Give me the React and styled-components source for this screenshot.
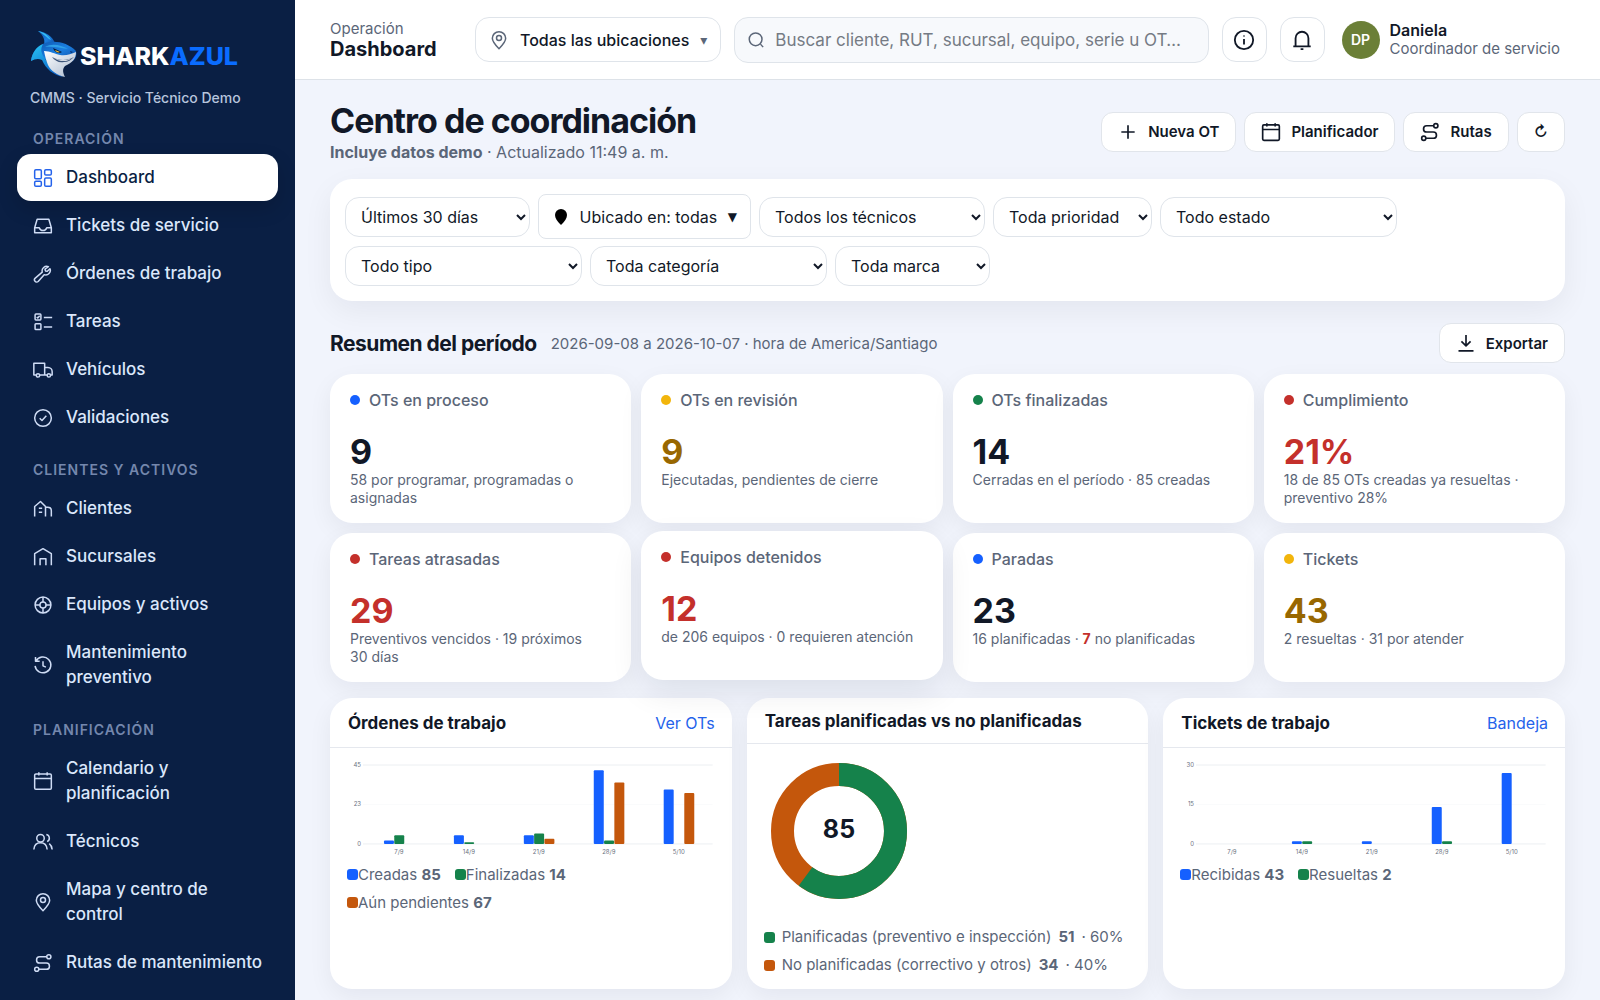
import React from "react";
import styled, { createGlobalStyle } from "styled-components";

const GlobalStyle = createGlobalStyle`
  * {
    box-sizing: border-box;
  }
  body {
    margin: 0;
    background: #f1f4fc;
    color: #111827;
    font-family: Inter, "Noto Sans", sans-serif;
    font-size: 16px;
  }
  button, input, select {
    font-family: inherit;
    color: inherit;
  }
  h1, h2, h3, p {
    margin: 0;
  }
`;

const Page = styled.div`
  display: flex;
  min-height: 100vh;
`;

/* ---------- sidebar ---------- */

const Sidebar = styled.aside`
  position: sticky;
  top: 0;
  flex: 0 0 295px;
  height: 100vh;
  overflow: hidden;
  padding: 29px 17px 0;
  background: #0a1f44;
`;

const Brand = styled.a`
  display: flex;
  align-items: center;
  gap: 2px;
  margin-left: 14px;
  height: 50px;
  color: #ffffff;
  font-size: 25px;
  font-weight: 800;
  text-decoration: none;
`;

const BrandName = styled.span`
  padding-top: 4px;
`;

const BrandBlue = styled.span`
  color: #0a6cff;
`;

const BrandNote = styled.p`
  margin: 9px 0 23px 13px;
  color: #b7c5dd;
  font-size: 14px;
  font-weight: 500;
  line-height: 20px;
`;

const NavGroup = styled.nav`
  display: flex;
  flex-direction: column;
  gap: 1px;
  margin-bottom: 21px;
`;

const NavHeading = styled.h2`
  margin: 0 0 6px 16px;
  color: #7487ad;
  font-size: 14px;
  font-weight: 600;
  letter-spacing: 1px;
  line-height: 16px;
  text-transform: uppercase;
`;

const NavLink = styled.a`
  display: flex;
  align-items: center;
  gap: 13px;
  padding: 11px 14px 11px 16px;
  border-radius: 14px;
  background: ${({ $active }) => ($active ? "#ffffff" : "transparent")};
  box-shadow: ${({ $active }) =>
    $active ? "0 8px 20px rgba(0, 0, 0, 0.16)" : "none"};
  color: ${({ $active }) => ($active ? "#0a1f44" : "#dbe7fb")};
  font-size: 17px;
  font-weight: 500;
  line-height: 25px;
  text-decoration: none;

  svg {
    color: ${({ $active }) => ($active ? "#2563eb" : "#cfdcf5")};
  }
`;

/* ---------- top bar ---------- */

const Main = styled.div`
  flex: 1;
  min-width: 0;
`;

const TopBar = styled.header`
  display: flex;
  align-items: center;
  gap: 13px;
  height: 80px;
  padding: 0 40px 0 35px;
  border-bottom: 1px solid #dde2e8;
  background: #ffffff;
`;

const Crumb = styled.div`
  width: 132px;
  color: #5b6678;
  font-size: 15px;
  line-height: 19px;
`;

const CrumbTitle = styled.strong`
  display: block;
  color: #111827;
  font-size: 20px;
  font-weight: 700;
  line-height: 23px;
`;

const LocationButton = styled.button`
  display: flex;
  align-items: center;
  gap: 11px;
  height: 45px;
  padding: 0 13px;
  border: 1px solid #dfe4ea;
  border-radius: 14px;
  background: #ffffff;
  font-size: 16px;
  font-weight: 500;
  white-space: nowrap;

  svg {
    color: #5b6678;
  }
`;

const Caret = styled.span`
  color: ${({ $dark }) => ($dark ? "#111827" : "#5b6678")};
  font-family: "DejaVu Sans", sans-serif;
  font-size: ${({ $dark }) => ($dark ? "12px" : "14px")};
`;

const SearchBox = styled.label`
  display: flex;
  flex: 1;
  align-items: center;
  gap: 8px;
  height: 46px;
  padding: 0 12px;
  border: 1px solid #dfe4ea;
  border-radius: 14px;
  background: #f7f9fc;
  color: #5b6678;
`;

const SearchInput = styled.input`
  flex: 1;
  min-width: 0;
  border: 0;
  outline: 0;
  background: transparent;
  font-size: 17px;

  &::placeholder {
    color: #757b84;
  }
`;

const IconButton = styled.button`
  display: flex;
  align-items: center;
  justify-content: center;
  width: 45px;
  height: 45px;
  padding: 0;
  border: 1px solid #dfe4ea;
  border-radius: 14px;
  background: #ffffff;
`;

const User = styled.div`
  display: flex;
  align-items: center;
  gap: 10px;
  margin-left: 4px;
  white-space: nowrap;
`;

const Avatar = styled.span`
  display: flex;
  align-items: center;
  justify-content: center;
  width: 38px;
  height: 38px;
  border-radius: 50%;
  background: #6b7f37;
  color: #ffffff;
  font-size: 14px;
  font-weight: 600;
`;

const UserName = styled.div`
  font-size: 16px;
  font-weight: 600;
  line-height: 19px;
`;

const UserRole = styled.div`
  color: #5b6678;
  font-size: 15px;
  line-height: 18px;
`;

/* ---------- page heading and filters ---------- */

const Content = styled.main`
  padding: 21px 35px 10px;
`;

const Row = styled.div`
  display: flex;
  align-items: center;
  justify-content: space-between;
`;

const Title = styled.h1`
  font-size: 34px;
  font-weight: 700;
  letter-spacing: -1px;
  line-height: 40px;
`;

const Updated = styled.p`
  margin-top: 1px;
  color: #5b6678;
  font-size: 16px;
  line-height: 20px;
`;

const Actions = styled.div`
  display: flex;
  gap: 8px;
`;

const ActionButton = styled.button`
  display: flex;
  align-items: center;
  gap: 10px;
  height: 40px;
  padding: 0 16px;
  border: 1px solid #e1e5eb;
  border-radius: 12px;
  background: #ffffff;
  font-size: 15px;
  font-weight: 600;
`;

const Filters = styled.form`
  display: flex;
  flex-wrap: wrap;
  align-items: center;
  gap: 7px 8px;
  margin-top: 17px;
  padding: 15px;
  border-radius: 22px;
  background: #ffffff;
  box-shadow: 0 10px 30px rgba(15, 23, 42, 0.06);
`;

const Select = styled.select`
  width: ${({ $width }) => $width}px;
  height: 40px;
  padding: 0 11px;
  border: 1px solid #dfe4ea;
  border-radius: 14px;
  background: #ffffff;
  font-size: 16px;
`;

const PlaceButton = styled.button`
  display: flex;
  align-items: center;
  justify-content: space-between;
  width: 213px;
  height: 45px;
  padding: 0 13px 0 14px;
  border: 1px solid #dfe4ea;
  border-radius: 8px;
  background: #ffffff;
  font-size: 16px;
`;

/* ---------- summary ---------- */

const SummaryRow = styled(Row)`
  margin: 22px 0 11px;
`;

const SummaryTitle = styled.h2`
  display: flex;
  align-items: center;
  gap: 14px;
  font-size: 21px;
  font-weight: 700;
  letter-spacing: -0.5px;
`;

const SummaryNote = styled.small`
  color: #5b6678;
  font-size: 15px;
  font-weight: 400;
  letter-spacing: 0;
`;

const Kpis = styled.section`
  display: grid;
  grid-template-columns: repeat(4, 1fr);
  gap: 10px;
`;

const Kpi = styled.article`
  min-height: 149px;
  padding: 16px 20px 14px;
  border-radius: 22px;
  background: #ffffff;
  box-shadow: ${({ $raised }) =>
    $raised
      ? "0 12px 32px rgba(15, 23, 42, 0.09)"
      : "0 8px 24px rgba(15, 23, 42, 0.06)"};
  transform: ${({ $raised }) => ($raised ? "translateY(-2px)" : "none")};
`;

const KpiLabel = styled.h3`
  display: flex;
  align-items: center;
  gap: 9px;
  color: #5b6678;
  font-size: 16px;
  font-weight: 500;
  line-height: 20px;

  &::before {
    content: "";
    width: 10px;
    height: 10px;
    border-radius: 50%;
    background: ${({ $dot }) => $dot};
  }
`;

const KpiValue = styled.div`
  margin-top: 22px;
  color: ${({ $color }) => $color || "#111827"};
  font-size: 34px;
  font-weight: 700;
  line-height: 39px;
`;

const KpiNote = styled.p`
  color: #5b6678;
  font-size: 14px;
  line-height: 18px;
`;

const Alert = styled.b`
  color: #c4302b;
`;

/* ---------- charts ---------- */

const Charts = styled.section`
  display: grid;
  grid-template-columns: repeat(3, 1fr);
  gap: 15px;
  margin-top: 16px;
`;

const Panel = styled.article`
  overflow: hidden;
  border-radius: 22px;
  background: #ffffff;
  box-shadow: 0 8px 24px rgba(15, 23, 42, 0.06);
`;

const PanelHead = styled(Row)`
  padding: 12px 17px 11px 18px;
  border-bottom: 1px solid #e5e8ee;
`;

const PanelTitle = styled.h3`
  font-size: 17px;
  font-weight: 700;
  line-height: 22px;
`;

const PanelLink = styled.a`
  color: #2563eb;
  font-size: 16px;
  line-height: 26px;
  text-decoration: none;
`;

const PanelBody = styled.div`
  padding: 12px 17px 14px;
`;

const BarSvg = styled.svg`
  display: block;
  width: 100%;

  text {
    fill: #6b7280;
    font-size: 6px;
  }
`;

const Legend = styled.ul`
  display: flex;
  flex-wrap: wrap;
  flex-direction: ${({ $column }) => ($column ? "column" : "row")};
  gap: 8px 14px;
  margin: ${({ $column }) => ($column ? "17px" : "7px")} 0 0;
  padding: 0;
  color: #5b6678;
  font-size: 15px;
  line-height: 20px;
  list-style: none;
`;

const LegendItem = styled.li`
  display: flex;
  align-items: center;
  gap: ${({ $gap }) => $gap || 0}px;
  white-space: pre;

  &::before {
    content: "";
    width: 11px;
    height: 11px;
    border-radius: 3px;
    background: ${({ $color }) => $color};
  }
`;

const BLUE = "#1560ff";
const GREEN = "#15824b";
const ORANGE = "#c4570c";
const RED = "#c4302b";
const YELLOW = "#f2b50c";
const AMBER = "#986700";

const icons = {
  dashboard: (
    <>
      <rect x="2" y="2" width="8" height="11" rx="1.5" />
      <rect x="14" y="2" width="8" height="6.5" rx="1.5" />
      <rect x="2" y="16" width="8" height="6" rx="1.5" />
      <rect x="14" y="12" width="8" height="10" rx="1.5" />
    </>
  ),
  inbox: (
    <>
      <path d="M5 4h14l3 10v6H2v-6z" />
      <path d="M2 14h5.500c1 3 2.500 3.500 4.500 3.500s3.500-.5 4.500-3.500H22" />
    </>
  ),
  wrench: (
    <path d="M18.500 3.300a5.500 5.500 0 0 0-7.400 6.500L2.700 17a2.300 2.300 0 0 0 3.500 4l7.200-8.200a5.500 5.500 0 0 0 7-7.200l-3.300 3.200-2.200-.5-.5-2.200z" />
  ),
  tasks: (
    <>
      <rect x="2.500" y="2.500" width="7" height="7" rx="1" />
      <rect x="2.500" y="14" width="7" height="7" rx="1" />
      <path d="m4.500 6 1.200 1.200L8 4.500M13 6.500h10M13 18h10" />
    </>
  ),
  truck: (
    <>
      <path d="M4 18H1V4h13v14H8M14 9h4c3 0 5 2.500 5 5v4h-2M17 18h-3" />
      <circle cx="6" cy="18.500" r="2" />
      <circle cx="19" cy="18.500" r="2" />
    </>
  ),
  check: (
    <>
      <circle cx="12" cy="12" r="10" />
      <path d="m8 12.300 2.800 2.700 5.200-5.700" />
    </>
  ),
  clients: (
    <path d="M2 21V9l7-6 6 6v12M15 10h2.500c3 0 4.500 1.500 4.500 4v7M7 11h4M7 16h4" />
  ),
  branch: <path d="M2 22V8l10-6 10 6v14M8.500 22v-8h7v8" />,
  assets: (
    <>
      <circle cx="12" cy="12" r="9.500" />
      <circle cx="12" cy="12" r="3.700" />
      <path d="M12 2.500v5.800M12 15.700v5.800M2.500 12h5.800M15.700 12h5.800" />
    </>
  ),
  history: (
    <>
      <path d="M3.500 7.500A9.500 9.500 0 1 1 2.500 13M3 2.500v5h5" />
      <path d="M12 7.500V13l3.500 1.500" />
    </>
  ),
  calendar: (
    <>
      <rect x="2" y="3.500" width="20" height="18.500" rx="1.500" />
      <path d="M2 9h20M7 1.500v4M17 1.500v4" />
    </>
  ),
  people: (
    <>
      <circle cx="9" cy="7.500" r="4.500" />
      <path d="M1 21c.5-5 3.500-8 8-8s7.500 3 8 8M16 3a4.500 4.500 0 0 1 1 8.500M19.500 14c2 1.500 3.200 4 3.500 7" />
    </>
  ),
  pin: (
    <>
      <path d="M12 22.500c-5-5-8-8.500-8-12.500a8 8 0 0 1 16 0c0 4-3 7.500-8 12.500z" />
      <circle cx="12" cy="9.500" r="3" />
    </>
  ),
  route: (
    <>
      <circle cx="19" cy="4.500" r="2.500" />
      <circle cx="4.500" cy="19.500" r="2.500" />
      <path d="M16.500 4.500H8a3.700 3.700 0 0 0 0 7.500h8a3.700 3.700 0 0 1 0 7.500H7" />
    </>
  ),
  search: (
    <>
      <circle cx="11.500" cy="11" r="8.500" />
      <path d="m18 17.500 3.500 4" />
    </>
  ),
  info: (
    <>
      <circle cx="12" cy="12" r="10" />
      <path d="M12 11v6M12 7v1.200" />
    </>
  ),
  bell: <path d="M2.500 19h19M5 19v-9a7 7 0 0 1 14 0v9M10.500 22h3" />,
  plus: <path d="M12 4v16M4 12h16" />,
  download: <path d="M12 2.500v13M6.500 10l5.500 5.500 5.500-5.500M3 21.500h18" />,
};

const IconSvg = styled.svg`
  flex: none;
  fill: none;
  stroke: currentColor;
  stroke-linejoin: round;
`;

function Icon({ name, size = 20, weight = 1.8 }) {
  return (
    <IconSvg
      width={size}
      height={size}
      viewBox="0 0 24 24"
      strokeWidth={weight}
      aria-hidden="true"
    >
      {icons[name]}
    </IconSvg>
  );
}

function SharkLogo() {
  return (
    <svg width="47" height="48" viewBox="0 0 47 48" aria-hidden="true">
      <defs>
        <linearGradient id="back" x1="0" y1="0" x2="1" y2="1">
          <stop offset="0" stopColor="#0c4fa8" />
          <stop offset="0.5" stopColor="#1b7fe0" />
          <stop offset="1" stopColor="#0b3f96" />
        </linearGradient>
        <linearGradient id="side" x1="0" y1="0" x2="0.6" y2="1">
          <stop offset="0" stopColor="#29c8f5" />
          <stop offset="1" stopColor="#0b63c9" />
        </linearGradient>
        <linearGradient id="belly" x1="0" y1="0" x2="1" y2="1">
          <stop offset="0" stopColor="#ffffff" />
          <stop offset="1" stopColor="#a9b9cf" />
        </linearGradient>
      </defs>
      <path d="M7 1c8 1 14 5 17 12l-12 5c3-7 1-12-5-17z" fill="url(#back)" />
      <path d="M7 1c6 1 10 4 13 9-4-2-7-6-13-9z" fill="#35bdf2" />
      <path
        d="M0 31c1-9 6-15 14-18 11-3 23 0 31 8 1 4 0 7-3 10l-21 5-7-7c-4-2-9-2-14 2z"
        fill="url(#back)"
      />
      <path
        d="M0 31c1-8 5-14 12-17-3 5-2 10 3 16 3 6 9 11 17 17-10-2-17-8-21-17-4-2-7-1-11 1z"
        fill="url(#side)"
      />
      <path
        d="M13 21c6 0 11 3 16 4 6 1 11-1 16-3 0 7-4 11-11 14-3 3-2 7 0 11-8-2-14-6-17-12-2-5-3-9-4-14z"
        fill="url(#belly)"
      />
      <path
        d="M21 27c7 4 15 4 22 0-3 3-6 5-10 5-5 1-9-1-12-5z"
        fill="#3c5478"
      />
      <path d="M23 28c6 3 13 3 18 0l-3 2c-5 2-11 1-15-2z" fill="#ffffff" />
      <path d="m22 18 9 4c-3 2-7 1-9-4z" fill="#071b3c" />
      <path d="m24 20 5 2c-2 1-4 0-5-2z" fill="#ffc531" />
      <path d="M14 17c7-4 16-2 23 2-8-1-15-3-23-2z" fill="#2f9fe8" />
      <path d="m39 21 3 1-2 1z" fill="#082b66" />
    </svg>
  );
}

const navGroups = [
  {
    title: "Operación",
    items: [
      ["dashboard", "Dashboard"],
      ["inbox", "Tickets de servicio"],
      ["wrench", "Órdenes de trabajo"],
      ["tasks", "Tareas"],
      ["truck", "Vehículos"],
      ["check", "Validaciones"],
    ],
  },
  {
    title: "Clientes y activos",
    items: [
      ["clients", "Clientes"],
      ["branch", "Sucursales"],
      ["assets", "Equipos y activos"],
      ["history", "Mantenimiento preventivo"],
    ],
  },
  {
    title: "Planificación",
    items: [
      ["calendar", "Calendario y planificación"],
      ["people", "Técnicos"],
      ["pin", "Mapa y centro de control"],
      ["route", "Rutas de mantenimiento"],
    ],
  },
];

const kpis = [
  {
    label: "OTs en proceso",
    dot: BLUE,
    value: "9",
    note: "58 por programar, programadas o asignadas",
  },
  {
    label: "OTs en revisión",
    dot: YELLOW,
    value: "9",
    color: AMBER,
    note: "Ejecutadas, pendientes de cierre",
  },
  {
    label: "OTs finalizadas",
    dot: GREEN,
    value: "14",
    note: "Cerradas en el período · 85 creadas",
  },
  {
    label: "Cumplimiento",
    dot: RED,
    value: "21%",
    color: RED,
    note: "18 de 85 OTs creadas ya resueltas · preventivo 28%",
  },
  {
    label: "Tareas atrasadas",
    dot: RED,
    value: "29",
    color: RED,
    note: "Preventivos vencidos · 19 próximos 30\u00a0días",
  },
  {
    label: "Equipos detenidos",
    dot: RED,
    value: "12",
    color: RED,
    note: "de 206 equipos · 0 requieren atención",
    raised: true,
  },
  {
    label: "Paradas",
    dot: BLUE,
    value: "23",
    note: (
      <>
        16 planificadas · <Alert>7</Alert> no planificadas
      </>
    ),
  },
  {
    label: "Tickets",
    dot: YELLOW,
    value: "43",
    color: AMBER,
    note: "2 resueltas · 31 por atender",
  },
];

const weeks = ["7/9", "14/9", "21/9", "28/9", "5/10"];

function BarChart({ label, max, series, colors }) {
  const base = 84;
  const height = 79;
  const bar = 10;
  return (
    <BarSvg viewBox="0 0 368 98" role="img" aria-label={label}>
      {[max, Math.round(max / 2), 0].map((tick, i) => (
        <g key={tick}>
          <line
            x1="16"
            x2="366"
            y1={base - height + (i * height) / 2}
            y2={base - height + (i * height) / 2}
            stroke={i === 1 ? "#fafbfc" : "#eceff2"}
          />
          <text
            x="14"
            y={base - height + (i * height) / 2 + 2}
            textAnchor="end"
          >
            {tick}
          </text>
        </g>
      ))}
      {weeks.map((week, i) => {
        const center = 52 + i * 70;
        const left = center - (series.length * bar) / 2;
        return (
          <g key={week}>
            {series.map((values, n) => {
              const h = (values[i] / max) * height;
              return (
                <rect
                  key={n}
                  x={left + n * (bar + 0.3)}
                  y={base - h}
                  width={bar}
                  height={h}
                  rx="1"
                  fill={colors[n]}
                />
              );
            })}
            <text x={center} y={base + 10} textAnchor="middle">
              {week}
            </text>
          </g>
        );
      })}
    </BarSvg>
  );
}

function Donut({ total, share }) {
  const length = 2 * Math.PI * 56.5;
  return (
    <svg
      width="150"
      height="150"
      viewBox="0 0 150 150"
      role="img"
      aria-label="Tareas planificadas vs no planificadas"
    >
      <g fill="none" strokeWidth="23" transform="rotate(-90 75 75)">
        <circle cx="75" cy="75" r="56.500" stroke={ORANGE} />
        <circle
          cx="75"
          cy="75"
          r="56.500"
          stroke={GREEN}
          strokeDasharray={`${length * share} ${length}`}
        />
      </g>
      <text
        x="75"
        y="82"
        fill="#111827"
        fontSize="25"
        fontWeight="700"
        textAnchor="middle"
      >
        {total}
      </text>
    </svg>
  );
}

function Filter({ label, width }) {
  return (
    <Select $width={width} aria-label={label}>
      <option>{label}</option>
    </Select>
  );
}

function App() {
  return (
    <Page>
      <GlobalStyle />
      <Sidebar>
        <Brand href="#">
          <SharkLogo />
          <BrandName>
            SHARK<BrandBlue>AZUL</BrandBlue>
          </BrandName>
        </Brand>
        <BrandNote>CMMS · Servicio Técnico Demo</BrandNote>
        {navGroups.map((group) => (
          <NavGroup key={group.title} aria-label={group.title}>
            <NavHeading>{group.title}</NavHeading>
            {group.items.map(([icon, text]) => (
              <NavLink key={text} href="#" $active={text === "Dashboard"}>
                <Icon name={icon} />
                <span>{text}</span>
              </NavLink>
            ))}
          </NavGroup>
        ))}
      </Sidebar>

      <Main>
        <TopBar>
          <Crumb>
            Operación
            <CrumbTitle>Dashboard</CrumbTitle>
          </Crumb>
          <LocationButton type="button">
            <Icon name="pin" />
            Todas las ubicaciones
            <Caret>▾</Caret>
          </LocationButton>
          <SearchBox>
            <Icon name="search" size={18} weight={2} />
            <SearchInput
              type="text"
              aria-label="Buscar"
              placeholder="Buscar cliente, RUT, sucursal, equipo, serie u OT…"
            />
          </SearchBox>
          <IconButton type="button" aria-label="Información">
            <Icon name="info" size={22} weight={2} />
          </IconButton>
          <IconButton type="button" aria-label="Notificaciones">
            <Icon name="bell" size={22} weight={2} />
          </IconButton>
          <User>
            <Avatar>DP</Avatar>
            <div>
              <UserName>Daniela</UserName>
              <UserRole>Coordinador de servicio</UserRole>
            </div>
          </User>
        </TopBar>

        <Content>
          <Row>
            <div>
              <Title>Centro de coordinación</Title>
              <Updated>
                <b>Incluye datos demo</b> · Actualizado 11:49 a. m.
              </Updated>
            </div>
            <Actions>
              <ActionButton type="button">
                <Icon name="plus" weight={2} />
                Nueva OT
              </ActionButton>
              <ActionButton type="button">
                <Icon name="calendar" weight={2} />
                Planificador
              </ActionButton>
              <ActionButton type="button">
                <Icon name="route" weight={2} />
                Rutas
              </ActionButton>
              <ActionButton type="button" aria-label="Actualizar">
                ↻
              </ActionButton>
            </Actions>
          </Row>

          <Filters>
            <Filter label="Últimos 30 días" width={185} />
            <PlaceButton type="button">
              <svg width="16" height="18" viewBox="0 0 16 18" aria-hidden="true">
                <path d="M8 17C4 13 2 10 2 7a6 6 0 0 1 12 0c0 3-2 6-6 10z" />
              </svg>
              Ubicado en: todas
              <Caret $dark>▼</Caret>
            </PlaceButton>
            <Filter label="Todos los técnicos" width={226} />
            <Filter label="Toda prioridad" width={159} />
            <Filter label="Todo estado" width={237} />
            <Filter label="Todo tipo" width={237} />
            <Filter label="Toda categoría" width={237} />
            <Filter label="Toda marca" width={155} />
          </Filters>

          <SummaryRow>
            <SummaryTitle>
              Resumen del período
              <SummaryNote>
                2026-09-08 a 2026-10-07 · hora de America/Santiago
              </SummaryNote>
            </SummaryTitle>
            <ActionButton type="button">
              <Icon name="download" weight={2} />
              Exportar
            </ActionButton>
          </SummaryRow>

          <Kpis>
            {kpis.map((kpi) => (
              <Kpi key={kpi.label} $raised={kpi.raised}>
                <KpiLabel $dot={kpi.dot}>{kpi.label}</KpiLabel>
                <KpiValue $color={kpi.color}>{kpi.value}</KpiValue>
                <KpiNote>{kpi.note}</KpiNote>
              </Kpi>
            ))}
          </Kpis>

          <Charts>
            <Panel>
              <PanelHead>
                <PanelTitle>Órdenes de trabajo</PanelTitle>
                <PanelLink href="#">Ver OTs</PanelLink>
              </PanelHead>
              <PanelBody>
                <BarChart
                  label="Órdenes de trabajo por semana"
                  max={45}
                  series={[
                    [2, 5, 5, 42, 31],
                    [5, 1, 6, 2, 0],
                    [0, 0, 3, 35, 29],
                  ]}
                  colors={[BLUE, GREEN, ORANGE]}
                />
                <Legend>
                  <LegendItem $color={BLUE}>
                    <span>
                      Creadas <b>85</b>
                    </span>
                  </LegendItem>
                  <LegendItem $color={GREEN}>
                    <span>
                      Finalizadas <b>14</b>
                    </span>
                  </LegendItem>
                  <LegendItem $color={ORANGE}>
                    <span>
                      Aún pendientes <b>67</b>
                    </span>
                  </LegendItem>
                </Legend>
              </PanelBody>
            </Panel>

            <Panel>
              <PanelHead>
                <PanelTitle>Tareas planificadas vs no planificadas</PanelTitle>
              </PanelHead>
              <PanelBody>
                <Donut total={85} share={0.6} />
                <Legend $column>
                  <LegendItem $color={GREEN} $gap={7}>
                    <span>Planificadas (preventivo e inspección)</span>
                    <b>51</b>
                    <span>· 60%</span>
                  </LegendItem>
                  <LegendItem $color={ORANGE} $gap={7}>
                    <span>No planificadas (correctivo y otros)</span>
                    <b>34</b>
                    <span>· 40%</span>
                  </LegendItem>
                </Legend>
              </PanelBody>
            </Panel>

            <Panel>
              <PanelHead>
                <PanelTitle>Tickets de trabajo</PanelTitle>
                <PanelLink href="#">Bandeja</PanelLink>
              </PanelHead>
              <PanelBody>
                <BarChart
                  label="Tickets de trabajo por semana"
                  max={30}
                  series={[
                    [0, 1, 1, 14, 27],
                    [0, 1, 0, 1, 0],
                  ]}
                  colors={[BLUE, GREEN]}
                />
                <Legend>
                  <LegendItem $color={BLUE}>
                    <span>
                      Recibidas <b>43</b>
                    </span>
                  </LegendItem>
                  <LegendItem $color={GREEN}>
                    <span>
                      Resueltas <b>2</b>
                    </span>
                  </LegendItem>
                </Legend>
              </PanelBody>
            </Panel>
          </Charts>
        </Content>
      </Main>
    </Page>
  );
}

export default App;
